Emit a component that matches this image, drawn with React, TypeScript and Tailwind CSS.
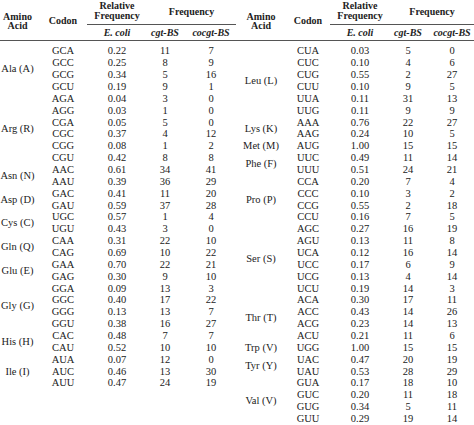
import React from "react";

type Row = [string, string, string, string];
type Group = { aa: string; rows: Row[] };

const left: Group[] = [
  { aa: "Ala (A)", rows: [["GCA", "0.22", "11", "7"], ["GCC", "0.25", "8", "9"], ["GCG", "0.34", "5", "16"], ["GCU", "0.19", "9", "1"]] },
  { aa: "Arg (R)", rows: [["AGA", "0.04", "3", "0"], ["AGG", "0.03", "1", "0"], ["CGA", "0.05", "5", "0"], ["CGC", "0.37", "4", "12"], ["CGG", "0.08", "1", "2"], ["CGU", "0.42", "8", "8"]] },
  { aa: "Asn (N)", rows: [["AAC", "0.61", "34", "41"], ["AAU", "0.39", "36", "29"]] },
  { aa: "Asp (D)", rows: [["GAC", "0.41", "11", "20"], ["GAU", "0.59", "37", "28"]] },
  { aa: "Cys (C)", rows: [["UGC", "0.57", "1", "4"], ["UGU", "0.43", "3", "0"]] },
  { aa: "Gln (Q)", rows: [["CAA", "0.31", "22", "10"], ["CAG", "0.69", "10", "22"]] },
  { aa: "Glu (E)", rows: [["GAA", "0.70", "22", "21"], ["GAG", "0.30", "9", "10"]] },
  { aa: "Gly (G)", rows: [["GGA", "0.09", "13", "3"], ["GGC", "0.40", "17", "22"], ["GGG", "0.13", "13", "7"], ["GGU", "0.38", "16", "27"]] },
  { aa: "His (H)", rows: [["CAC", "0.48", "7", "7"], ["CAU", "0.52", "10", "10"]] },
  { aa: "Ile (I)", rows: [["AUA", "0.07", "12", "0"], ["AUC", "0.46", "13", "30"], ["AUU", "0.47", "24", "19"]] },
];

const right: Group[] = [
  { aa: "Leu (L)", rows: [["CUA", "0.03", "5", "0"], ["CUC", "0.10", "4", "6"], ["CUG", "0.55", "2", "27"], ["CUU", "0.10", "9", "5"], ["UUA", "0.11", "31", "13"], ["UUG", "0.11", "9", "9"]] },
  { aa: "Lys (K)", rows: [["AAA", "0.76", "22", "27"], ["AAG", "0.24", "10", "5"]] },
  { aa: "Met (M)", rows: [["AUG", "1.00", "15", "15"]] },
  { aa: "Phe (F)", rows: [["UUC", "0.49", "11", "14"], ["UUU", "0.51", "24", "21"]] },
  { aa: "Pro (P)", rows: [["CCA", "0.20", "7", "4"], ["CCC", "0.10", "3", "2"], ["CCG", "0.55", "2", "18"], ["CCU", "0.16", "7", "5"]] },
  { aa: "Ser (S)", rows: [["AGC", "0.27", "16", "19"], ["AGU", "0.13", "11", "8"], ["UCA", "0.12", "16", "14"], ["UCC", "0.17", "6", "9"], ["UCG", "0.13", "4", "14"], ["UCU", "0.19", "14", "3"]] },
  { aa: "Thr (T)", rows: [["ACA", "0.30", "17", "11"], ["ACC", "0.43", "14", "26"], ["ACG", "0.23", "14", "13"], ["ACU", "0.21", "11", "6"]] },
  { aa: "Trp (V)", rows: [["UGG", "1.00", "15", "15"]] },
  { aa: "Tyr (Y)", rows: [["UAC", "0.47", "20", "19"], ["UAU", "0.53", "28", "29"]] },
  { aa: "Val (V)", rows: [["GUA", "0.17", "18", "10"], ["GUC", "0.20", "11", "18"], ["GUG", "0.34", "5", "11"], ["GUU", "0.29", "19", "14"]] },
];

type Widths = { c1: string; c2: string; c3: string; c4: string; c5: string };

const leftW: Widths = { c1: "w-[35px]", c2: "w-[52px] pl-[4px]", c3: "w-[60px]", c4: "w-[36px]", c5: "w-[53px] pl-[3px]" };
const rightW: Widths = { c1: "w-[50px]", c2: "w-[44px]", c3: "w-[60px]", c4: "w-[36px]", c5: "w-[48px] pl-[4px]" };

function Table({ groups, w }: { groups: Group[]; w: Widths }) {
  return (
    <div className="flex flex-col">
      <div className="flex h-[41px] border-b border-[#555]">
        <div className={`${w.c1} shrink-0 flex flex-col items-center justify-center font-bold leading-[9.5px] pt-[2px]`}>
          <span>Amino</span>
          <span>Acid</span>
        </div>
        <div className={`${w.c2} shrink-0 flex items-center justify-center font-bold pt-[1px]`}>Codon</div>
        <div className="flex flex-col flex-1">
          <div className="flex h-[25px] border-b border-[#555]">
            <div className={`${w.c3} shrink-0 flex flex-col items-center justify-start font-bold leading-[9.5px] pt-[1px]`}>
              <span>Relative</span>
              <span>Frequency</span>
            </div>
            <div className="flex-1 flex items-start justify-center font-bold pt-[4px]">Frequency</div>
          </div>
          <div className="flex h-[15px] items-center italic font-bold">
            <div className={`${w.c3} shrink-0 text-center`}>E. coli</div>
            <div className={`${w.c4} shrink-0 text-center whitespace-nowrap`}>cgt-BS</div>
            <div className={`${w.c5} shrink-0 text-center whitespace-nowrap`}>cocgt-BS</div>
          </div>
        </div>
      </div>
      <div className="flex flex-col pt-[4px] text-[10.5px]">
        {groups.map((g) => (
          <div key={g.aa} className="flex">
            <div className={`${w.c1} shrink-0 flex items-center justify-center whitespace-nowrap leading-[11px]`}>{g.aa}</div>
            <div className="flex flex-col">
              {g.rows.map((r) => (
                <div key={r[0]} className="flex h-[11.87px] items-center leading-[11px]">
                  <div className={`${w.c2} shrink-0 text-center`}>{r[0]}</div>
                  <div className={`${w.c3} shrink-0 text-center`}>{r[1]}</div>
                  <div className={`${w.c4} shrink-0 text-center`}>{r[2]}</div>
                  <div className={`${w.c5} shrink-0 text-center`}>{r[3]}</div>
                </div>
              ))}
            </div>
          </div>
        ))}
      </div>
    </div>
  );
}

export default function App() {
  return (
    <div
      className="w-[474px] h-[425px] overflow-hidden bg-white text-[#222] text-[10px] flex"
      style={{ fontFamily: '"Liberation Serif", "Times New Roman", serif' }}
    >
      <Table groups={left} w={leftW} />
      <Table groups={right} w={rightW} />
    </div>
  );
}
